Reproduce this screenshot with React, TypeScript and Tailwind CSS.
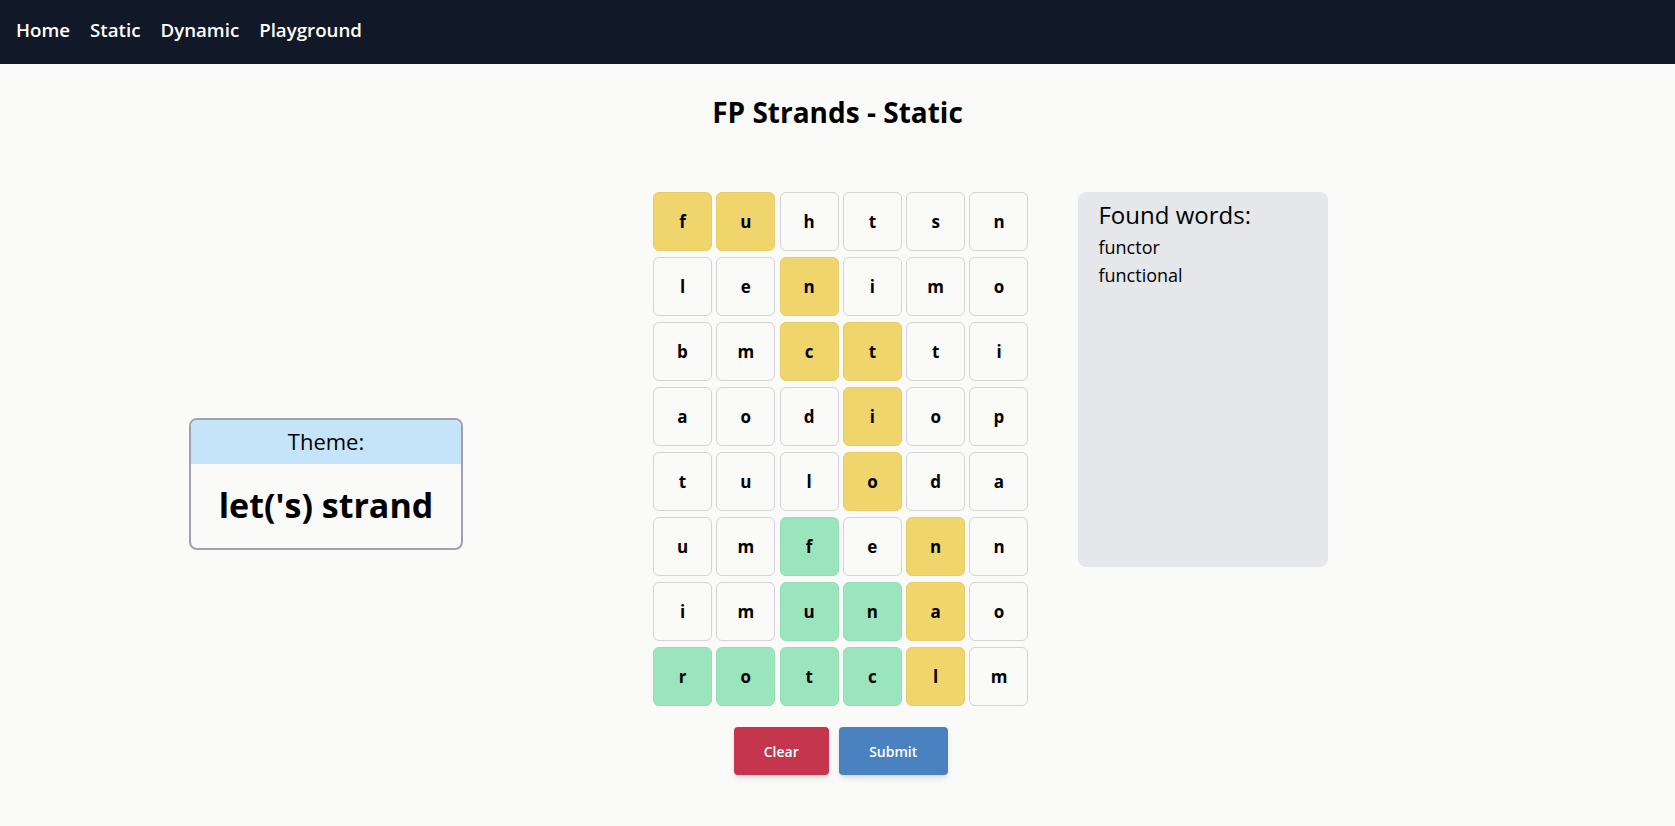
import React from 'react';

const grid = [
  'fuhtsn',
  'lenimo',
  'bmctti',
  'aodiop',
  'tuloda',
  'umfenn',
  'imunao',
  'rotclm',
];

// y = spangram-ish yellow path, g = found word green
const marks = [
  'yy....',
  '..y...',
  '..yy..',
  '...y..',
  '...y..',
  '..g.y.',
  '..ggy.',
  'ggggy.',
];

const foundWords = ['functor', 'functional'];

const Cell = ({ letter, mark }: { letter: string; mark: string }) => {
  const color =
    mark === 'y'
      ? 'bg-[#f0d46c] border-[#e6cc6a]'
      : mark === 'g'
      ? 'bg-[#9ae5be] border-[#95dcb8]'
      : 'bg-[#fafaf9] border-[#d4d4d8]';
  return (
    <div
      className={`w-[59px] h-[59px] flex items-center justify-center rounded-[6px] border text-[17px] font-bold text-black ${color}`}
    >
      {letter}
    </div>
  );
};

export default function App() {
  return (
    <div
      className="min-h-screen bg-[#fafaf9] text-black"
      style={{ fontFamily: '"Open Sans", "Noto Sans", sans-serif' }}
    >
      <nav className="h-16 bg-[#111827] flex items-center px-4 pb-1 gap-5">
        {['Home', 'Static', 'Dynamic', 'Playground'].map((item) => (
          <a key={item} className="text-white text-[18.7px] font-semibold cursor-pointer">
            {item}
          </a>
        ))}
      </nav>

      <h1 className="text-center text-[28px] font-bold mt-[30px] leading-9">FP Strands - Static</h1>

      <div className="flex items-start pl-[189px] mt-[62px]">
        <div className="flex items-center self-stretch h-[583px]">
          <div className="w-[274px] rounded-lg border-2 border-[#a1a1aa] overflow-hidden">
            <div className="bg-[#c6e4f9] h-[44px] flex items-center justify-center text-[22px] font-medium">
              Theme:
            </div>
            <div className="h-[84px] flex items-center justify-center text-[34px] font-bold">
              let('s) strand
            </div>
          </div>
        </div>

        <div className="ml-[190px] flex flex-col items-center">
          <div className="grid grid-cols-6 gap-x-[4.3px] gap-y-[6px]">
            {grid.map((row, r) =>
              row.split('').map((ch, c) => (
                <Cell key={`${r}-${c}`} letter={ch} mark={marks[r][c]} />
              ))
            )}
          </div>
          <div className="flex gap-[10px] mt-[21px]">
            <button className="w-[95px] h-12 rounded bg-[#c5354d] text-white text-[14px] font-semibold shadow-md">
              Clear
            </button>
            <button className="w-[109px] h-12 rounded bg-[#4a82c1] text-white text-[14px] font-semibold shadow-md">
              Submit
            </button>
          </div>
        </div>

        <div className="ml-[50px] w-[250px] h-[375px] bg-[#e5e7eb] rounded-lg px-5 pt-[7px]">
          <h2 className="text-[24px] font-medium leading-8">Found words:</h2>
          <ul className="mt-0.5">
            {foundWords.map((w) => (
              <li key={w} className="text-[18px] leading-7">
                {w}
              </li>
            ))}
          </ul>
        </div>
      </div>
    </div>
  );
}
